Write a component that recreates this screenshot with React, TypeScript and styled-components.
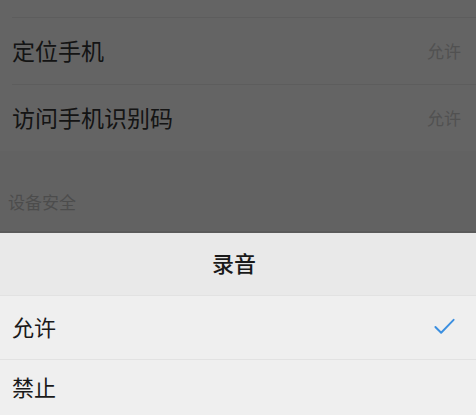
import styled, { createGlobalStyle } from 'styled-components'

const GlobalStyle = createGlobalStyle`
  *, *::before, *::after {
    box-sizing: border-box;
  }
  html, body {
    margin: 0;
    padding: 0;
    background: #ededed;
  }
  body {
    font-family: "Noto Sans CJK SC", "Noto Sans", sans-serif;
  }
`

const StyledScreen = styled.div`
  display: flex;
  flex-direction: column;
  width: 476px;
  height: 415px;
  overflow: hidden;
`

const StyledSettings = styled.div`
  position: relative;
  flex: 1;
  background: #f7f7f7;
  padding-top: 17px;
  overflow: hidden;
`

const StyledMask = styled.div`
  position: absolute;
  inset: 0;
  background: rgba(0, 0, 0, 0.595);
`

const StyledRow = styled.div`
  display: flex;
  align-items: center;
  justify-content: space-between;
  height: 67px;
  margin-left: 12px;
  padding: 0 15px 2px 0;
  border-top: 1px solid #e6e6e6;
  font-size: 23px;
  color: #333;
  .rowValue {
    font-size: 17px;
    color: #c8c8c8;
  }
`

const StyledSectionTitle = styled.div`
  display: flex;
  align-items: flex-end;
  height: 82px;
  padding: 0 0 19px 8px;
  background: #f2f2f2;
  font-size: 17px;
  color: #bdbdbd;
`

const StyledSheet = styled.div`
  display: flex;
  flex-direction: column;
  background: #efefef;
  border-top: 2px solid #5a5a5a;
`

const StyledSheetTitle = styled.div`
  display: flex;
  align-items: center;
  justify-content: center;
  height: 62px;
  padding: 0 8px 4px 0;
  background: #e9e9e9;
  font-size: 22px;
  font-weight: 500;
  color: #1a1a1a;
`

const StyledOption = styled.div<{ $last?: boolean }>`
  display: flex;
  align-items: center;
  justify-content: space-between;
  height: ${({ $last }) => ($last ? '56px' : '64px')};
  padding: 0 20px 3px 12px;
  border-top: 1px solid #e2e2e2;
  font-size: 22px;
  color: #1a1a1a;
  svg {
    width: 23px;
    height: 23px;
  }
`

const permissions = [
  { label: '定位手机', value: '允许' },
  { label: '访问手机识别码', value: '允许' },
]

const options = [
  { label: '允许', checked: true },
  { label: '禁止', checked: false },
]

export default function App() {
  return (
    <>
      <GlobalStyle />
      <StyledScreen>
        <StyledSettings>
          {permissions.map((item) => (
            <StyledRow key={item.label}>
              <span>{item.label}</span>
              <span className="rowValue">{item.value}</span>
            </StyledRow>
          ))}
          <StyledSectionTitle>设备安全</StyledSectionTitle>
          <StyledMask />
        </StyledSettings>
        <StyledSheet>
          <StyledSheetTitle>录音</StyledSheetTitle>
          {options.map((option, i) => (
            <StyledOption key={option.label} $last={i === options.length - 1}>
              <span>{option.label}</span>
              {option.checked && <CheckIcon />}
            </StyledOption>
          ))}
        </StyledSheet>
      </StyledScreen>
    </>
  )
}

function CheckIcon() {
  return (
    <svg viewBox="0 0 24 24" fill="none">
      <path
        d="M2.5 12.5 L8.5 18.5 L21.5 5"
        stroke="#3b8fe0"
        strokeWidth="2"
        strokeLinecap="round"
        strokeLinejoin="round"
      />
    </svg>
  )
}
